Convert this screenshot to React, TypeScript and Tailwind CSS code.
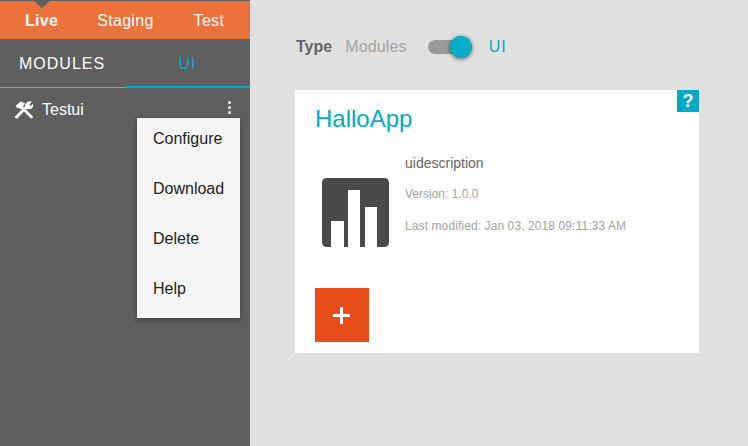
import React from "react";

function Tools() {
  return (
    <svg width="20" height="18" viewBox="0 0 20 18" className="shrink-0">
      <path d="M2.5 16 L12 6.5" stroke="#fff" strokeWidth="3" strokeLinecap="round" fill="none" />
      <path d="M11 5.5 Q11 2 14 0.8 Q16 0 18 0.6 L15.5 3.2 L16.6 5.2 L19 2.8 Q20 5.5 18 7.2 Q16 8.6 13.5 8 Z" fill="#fff" />
      <path d="M7.5 6 L17.5 16" stroke="#fff" strokeWidth="2.6" strokeLinecap="round" fill="none" />
      <path d="M1.5 5 L6.5 0.5 L11 2.2 L8.6 6.2 L6.2 8.2 L4.8 6.4 L3.2 7 Z" fill="#fff" />
    </svg>
  );
}

function AppLogo() {
  return (
    <svg width="67" height="69" viewBox="0 0 67 69" className="shrink-0">
      <path
        fill="#4a4a48"
        d="M5 0H62Q67 0 67 5V64Q67 69 62 69H55V29H43V69H38V12H26V69H22V43H9V69H5Q0 69 0 64V5Q0 0 5 0Z"
      />
    </svg>
  );
}

export default function App() {
  return (
    <div className="flex h-[446px] w-[748px] overflow-hidden bg-[#e0e0e0] font-['Liberation_Sans',Arial,sans-serif]">
      <aside className="relative flex w-[250px] shrink-0 flex-col bg-[#5f5f5f]">
        <div className="h-px bg-[#5f5f5f]" />
        <nav className="relative flex h-[38px] items-center bg-[#ec723b] pt-[2px] text-base tracking-[0.3px] text-white">
          <div className="absolute left-[34px] top-0 h-0 w-0 border-x-[8px] border-t-[7px] border-x-transparent border-t-[#5f5f5f]" />
          <span className="ml-[25px] font-bold">Live</span>
          <span className="ml-[39px]">Staging</span>
          <span className="ml-[40px]">Test</span>
        </nav>
        <div className="flex h-[49px] border-b border-[#9a9a9a]">
          <div className="flex w-[125px] items-center pl-[19px] pt-[2px] text-base tracking-[1px] text-white">MODULES</div>
          <div className="-mb-px flex w-[125px] items-center justify-center border-b-2 border-[#00a9c5] pt-[3px] text-base tracking-[1px] text-[#00a9c5]">UI</div>
        </div>
        <div className="flex h-[44px] items-center pl-[14px] pb-[1px] text-base text-white">
          <Tools />
          <span className="ml-2">Testui</span>
        </div>
        <div className="absolute left-[228px] top-[101px] flex flex-col gap-[2px]">
          <span className="h-[3px] w-[3px] rounded-full bg-white" />
          <span className="h-[3px] w-[3px] rounded-full bg-white" />
          <span className="h-[3px] w-[3px] rounded-full bg-white" />
        </div>
        <ul className="absolute left-[137px] top-[118px] w-[103px] bg-[#f5f5f5] text-base text-[#222] shadow-[0_2px_5px_rgba(0,0,0,0.35)]">
          <li className="flex h-[50px] items-center pb-[8px] pl-4">Configure</li>
          <li className="flex h-[50px] items-center pb-[8px] pl-4">Download</li>
          <li className="flex h-[50px] items-center pb-[8px] pl-4">Delete</li>
          <li className="flex h-[50px] items-center pb-[8px] pl-4">Help</li>
        </ul>
      </aside>
      <main className="flex-1 pl-[45px] pt-[37px]">
        <div className="flex h-5 items-center text-base">
          <span className="ml-px font-bold text-[#666]">Type</span>
          <span className="ml-[13px] tracking-[0.15px] text-[#a3a3a3]">Modules</span>
          <div className="relative ml-[21px] h-[14px] w-[36px] rounded-full bg-[#999]">
            <div className="absolute left-[22px] top-[-4px] h-[22px] w-[22px] rounded-full bg-[#00aec8] shadow-[0_1px_4px_rgba(0,0,0,0.6)]" />
          </div>
          <span className="ml-[25px] tracking-[1px] text-[#00a9c5]">UI</span>
        </div>
        <section className="relative mt-[33px] h-[263px] w-[404px] bg-white">
          <div className="absolute right-0 top-0 flex h-[22px] w-[22px] items-center justify-center bg-[#00a9c5] text-[18px] font-bold text-white">?</div>
          <h1 className="pl-5 pt-[14px] text-2xl leading-[29px] text-[#00a9c5]">HalloApp</h1>
          <div className="mt-[22px] flex">
            <div className="ml-[27px] mt-[23px]">
              <AppLogo />
            </div>
            <div className="ml-4 flex flex-col">
              <p className="h-[18px] text-sm leading-[16px] text-[#666]">uidescription</p>
              <p className="mt-[13px] h-4 text-xs leading-4 text-[#a3a3a3]">Version: 1.0.0</p>
              <p className="mt-[16px] h-4 text-xs leading-4 tracking-[0.1px] text-[#a3a3a3]">Last modified: Jan 03, 2018 09:11:33 AM</p>
            </div>
          </div>
          <button className="absolute bottom-[11px] left-5 flex h-[54px] w-[54px] items-center justify-center bg-[#e84c19] pr-px">
            <svg width="17" height="17" viewBox="0 0 17 17"><path d="M7 0h3v7h7v3h-7v7H7v-7H0V7h7z" fill="#fff" /></svg>
          </button>
        </section>
      </main>
    </div>
  );
}
